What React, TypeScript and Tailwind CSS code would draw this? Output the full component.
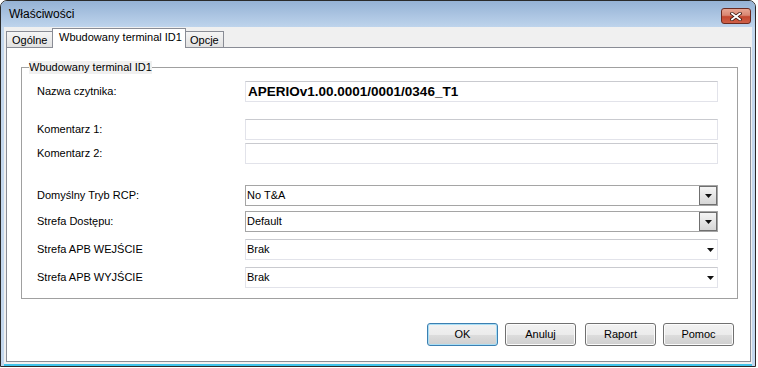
import React from "react";

const FONT = { fontFamily: '"Liberation Sans", Arial, sans-serif' };

function Arrow() {
	return (
		<svg width="7" height="4" viewBox="0 0 7 4" className="block">
			<polygon points="0,0 7,0 3.5,4" fill="#111" />
		</svg>
	);
}

function TextRow({ label, value, bold, className }: { label: string; value?: string; bold?: boolean; className?: string }) {
	return (
		<div className={"flex items-center h-[21px] pl-[15px] pr-[19px] " + (className ?? "")}>
			<div className="w-[208px] text-[11px] text-black leading-none">{label}</div>
			<div className="flex-1 h-full flex items-center bg-white border border-[#e2e3ea] border-t-[#c9cacf] pl-[2px]">
				{value && (
					<span className={bold ? "text-[13.5px] font-bold text-black leading-none" : "text-[11px] leading-none"}>{value}</span>
				)}
			</div>
		</div>
	);
}

function ComboRow({ label, value, editable, className }: { label: string; value: string; editable?: boolean; className?: string }) {
	return (
		<div className={"flex items-center h-[21px] pl-[15px] pr-[19px] " + (className ?? "")}>
			<div className="w-[208px] text-[11px] text-black leading-none">{label}</div>
			{editable ? (
				<div className="flex-1 h-full flex items-stretch bg-white border border-[#a5a5a5] pl-[1px]">
					<span className="flex-1 flex items-center text-[11px] leading-none text-black">{value}</span>
					<div className="w-[18px] flex items-center justify-center border border-[#6f6f6f] bg-gradient-to-b from-[#f5f5f5] to-[#d6d6d6]">
						<Arrow />
					</div>
				</div>
			) : (
				<div className="flex-1 h-full flex items-stretch bg-white border border-[#e2e3ea] border-t-[#c9cacf] pl-[1px]">
					<span className="flex-1 flex items-center text-[11px] leading-none text-black">{value}</span>
					<div className="w-[18px] pl-[4px] flex items-center justify-center">
						<Arrow />
					</div>
				</div>
			)}
		</div>
	);
}

function Button({ label, primary, className }: { label: string; primary?: boolean; className?: string }) {
	return (
		<button
			className={
				"w-[71px] h-[23px] rounded-[3px] border text-[11px] text-black leading-none bg-[linear-gradient(to_bottom,#f2f2f2_0%,#ebebeb_50%,#dddddd_50%,#cfcfcf_100%)] " +
				(primary
					? "border-[#3c7fb1] shadow-[inset_0_0_0_1px_#a9def5] "
					: "border-[#707070] shadow-[inset_0_0_0_1px_#fcfcfc] ") +
				(className ?? "")
			}
		>
			{label}
		</button>
	);
}

export default function App() {
	return (
		<div className="w-[758px] h-[368px] bg-white" style={FONT}>
			<div className="w-[756px] h-[367px] flex flex-col border border-[#2a2a2a] rounded-t-[7px] overflow-hidden bg-[#c3d7ed]">
				{/* title bar */}
				<div className="h-[26px] shrink-0 flex justify-between pl-[8px] pr-[4px] bg-gradient-to-b from-[#95b2d5] to-[#bed4ec]">
					<span className="self-center text-[12px] text-black leading-none">Właściwości</span>
					<div className="mt-[7px] w-[30px] h-[16px] rounded-[3px] border border-[#6b2a20] flex items-center justify-center bg-[linear-gradient(to_bottom,#e8a592_0%,#d98672_45%,#c3472f_55%,#cf6048_100%)]">
						<svg width="12" height="9" viewBox="0 0 12 9">
							<path d="M2 1.5 L10 7.5 M10 1.5 L2 7.5" stroke="#3b1810" strokeWidth="3.4" strokeLinecap="square" />
							<path d="M2 1.5 L10 7.5 M10 1.5 L2 7.5" stroke="#ffffff" strokeWidth="1.8" strokeLinecap="square" />
						</svg>
					</div>
				</div>

				{/* client area */}
				<div className="flex-1 mx-[3px] flex flex-col bg-[#f0f0f0] pl-[2px] pr-[1px] pt-[1px] pb-[2px] border-b-2 border-[#3fc3ea]">
					{/* tabs */}
					<div className="h-[19px] shrink-0 flex items-end">
						<div className="w-[46px] h-[16px] flex items-center pl-[5px] pt-[1px] border-l border-t border-[#898c95] bg-gradient-to-b from-[#f5f5f5] to-[#e2e2e2] text-[11px] leading-none">
							Ogólne
						</div>
						<div className="relative z-10 w-[134px] h-[20px] -mb-[1px] flex items-center pl-[6px] pb-[2px] border-l border-t border-r border-[#898c95] bg-white text-[11px] leading-none">
							Wbudowany terminal ID1
						</div>
						<div className="w-[38px] h-[16px] flex items-center pl-[4px] pt-[1px] border-r border-t border-[#898c95] bg-gradient-to-b from-[#f5f5f5] to-[#e2e2e2] text-[11px] leading-none">
							Opcje
						</div>
					</div>

					{/* panel */}
					<div className="flex-1 flex flex-col bg-white border border-[#898c95]">
						<div className="relative mt-[19px] ml-[14px] mr-[12px] border border-[#a0a0a0] pt-[13px] pb-[10px]">
							<span className="absolute left-[7px] -top-[7px] bg-[#f0f0f0] text-[11px] leading-[13px] text-black">
								Wbudowany terminal ID1
							</span>
							<TextRow label="Nazwa czytnika:" value="APERIOv1.00.0001/0001/0346_T1" bold />
							<TextRow label="Komentarz 1:" className="mt-[17px]" />
							<TextRow label="Komentarz 2:" className="mt-[3px]" />
							<ComboRow label="Domyślny Tryb RCP:" value="No T&A" editable className="mt-[21px]" />
							<ComboRow label="Strefa Dostępu:" value="Default" editable className="mt-[5px]" />
							<ComboRow label="Strefa APB WEJŚCIE" value="Brak" className="mt-[7px]" />
							<ComboRow label="Strefa APB WYJŚCIE" value="Brak" className="mt-[7px]" />
						</div>

						<div className="mt-[24px] flex justify-end pr-[16px]">
							<Button label="OK" primary />
							<Button label="Anuluj" className="ml-[7px]" />
							<Button label="Raport" className="ml-[9px]" />
							<Button label="Pomoc" className="ml-[7px]" />
						</div>
					</div>
				</div>
			</div>
		</div>
	);
}
